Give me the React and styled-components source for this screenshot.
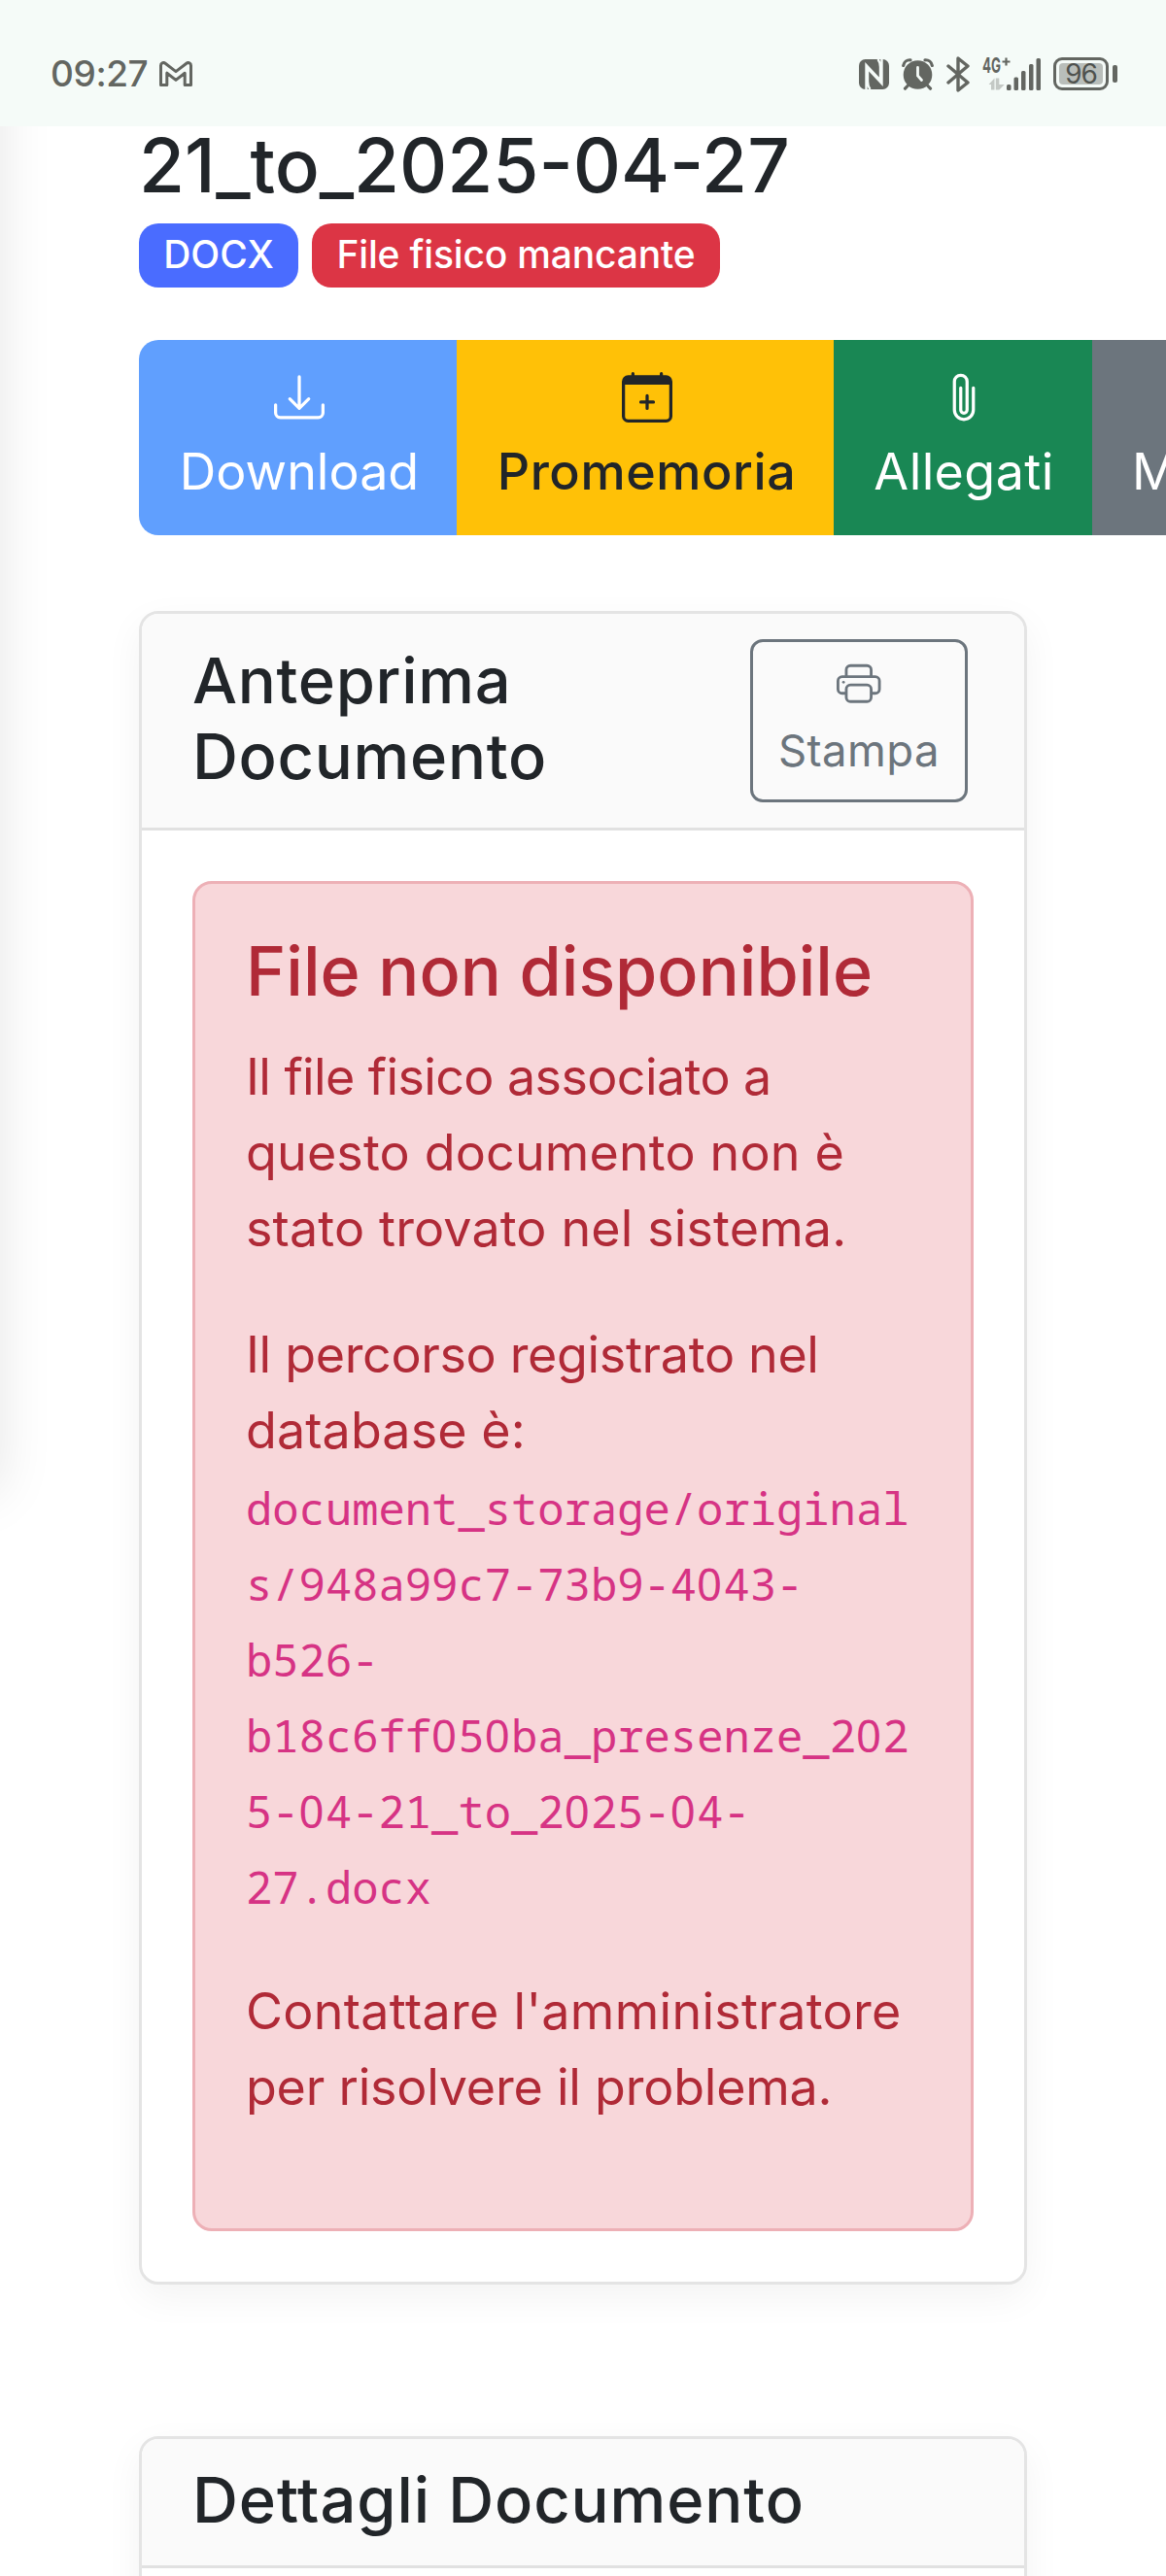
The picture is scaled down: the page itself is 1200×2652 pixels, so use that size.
import React from 'react';
import styled, { createGlobalStyle } from 'styled-components';
import { BsDownload, BsCalendarPlus, BsPaperclip, BsPrinter } from 'react-icons/bs';

const Global = createGlobalStyle`
  *, *::before, *::after { box-sizing: border-box; }
  body { margin: 0; background: #fff; }
`;

const Screen = styled.div`
  position: relative;
  width: 1200px;
  height: 2652px;
  overflow: hidden;
  background: #fff;
  color: #212529;
  font-family: Inter, 'Liberation Sans', sans-serif;
  font-size: 52px;
  line-height: 1.5;
`;

const SidebarEdge = styled.div`
  position: absolute;
  top: 0;
  left: -300px;
  width: 300px;
  height: 1536px;
  box-shadow: 0 0 52px rgba(0, 0, 0, 0.1);
`;

const StatusBar = styled.header`
  position: relative;
  display: flex;
  align-items: center;
  justify-content: space-between;
  height: 130px;
  padding: 22px 50px 0 52px;
  background: #f5fbf8;
  color: #636661;
`;

const StatusGroup = styled.div`
  display: flex;
  align-items: center;
  gap: ${(p) => p.$gap}px;
`;

const Clock = styled.span`
  font-size: 37px;
  line-height: 44px;
  font-weight: 500;
  letter-spacing: -0.4px;
`;

const Signal = styled.div`
  display: flex;
  align-items: flex-end;

  svg {
    overflow: visible;
  }
`;

const Battery = styled.div`
  display: flex;
  align-items: center;
  gap: 4px;

  &::after {
    content: '';
    width: 5px;
    height: 18px;
    border-radius: 2px;
    background: currentColor;
  }
`;

const BatteryShell = styled.div`
  width: 57px;
  height: 34px;
  padding: 3px;
  border: 3px solid currentColor;
  border-radius: 9px;
`;

const BatteryLevel = styled.div`
  height: 22px;
  border-radius: 4px;
  background: #b9beba;
  color: #4f524e;
  font-size: 28px;
  line-height: 22px;
  letter-spacing: -1px;
  text-align: center;
`;

const Content = styled.main`
  display: flex;
  flex-direction: column;
  padding-left: 143px;
`;

const PageTitle = styled.h1`
  margin: 0 0 19px;
  font-size: 76.3px;
  line-height: 81px;
  font-weight: 500;
`;

const BadgeRow = styled.div`
  display: flex;
  gap: 14px;
  margin-bottom: 54px;
`;

const Badge = styled.span`
  width: ${(p) => p.$width}px;
  height: 66px;
  border-radius: 20px;
  background: ${(p) => p.$bg};
  color: #fff;
  font-size: 39px;
  line-height: 64px;
  font-weight: 500;
  letter-spacing: ${(p) => p.$track || 0}px;
  text-align: center;
`;

const ButtonGroup = styled.div`
  display: flex;
  height: 201px;
  margin-bottom: 78px;
  border-radius: 20px 0 0 20px;
  overflow: hidden;
`;

const ActionButton = styled.button`
  display: flex;
  flex: none;
  flex-direction: column;
  align-items: ${(p) => p.$align || 'center'};
  gap: 12px;
  width: ${(p) => p.$width}px;
  padding: 33px 0 26px ${(p) => p.$pad || 0}px;
  border: 0;
  background: ${(p) => p.$bg};
  color: ${(p) => p.$color || '#fff'};
  font: inherit;
  font-weight: ${(p) => p.$weight || 400};
  letter-spacing: ${(p) => p.$track || 0}px;

  svg {
    flex: none;
    width: 52px;
    height: 52px;
  }
`;

const Card = styled.section`
  width: 914px;
  margin-bottom: 156px;
  border: 3px solid #e4e4e4;
  border-radius: 20px;
  background: #fff;
  box-shadow: 0 13px 39px rgba(0, 0, 0, 0.05);
`;

const CardHeader = styled.div`
  display: flex;
  align-items: center;
  justify-content: space-between;
  height: ${(p) => p.$height}px;
  padding: 0 58px 0 52px;
  border-bottom: 3px solid #e1e1e1;
  border-radius: 17px 17px 0 0;
  background: #fafafa;
`;

const CardTitle = styled.h2`
  margin: 0;
  padding-bottom: 5px;
  font-size: 65px;
  line-height: 78px;
  font-weight: 500;
  letter-spacing: ${(p) => p.$track}px;
`;

const CardBody = styled.div`
  padding: 52px;
`;

const OutlineButton = styled.button`
  display: flex;
  flex-direction: column;
  align-items: center;
  gap: 12px;
  width: 224px;
  height: 168px;
  padding: 20px 0 0;
  border: 3px solid #6c757d;
  border-radius: 13px;
  background: transparent;
  color: #6c757d;
  font: inherit;
  font-size: 45.5px;
  letter-spacing: 0.4px;

  svg {
    flex: none;
    width: 45.5px;
    height: 45.5px;
  }
`;

const Alert = styled.div`
  width: 804px;
  height: 1390px;
  padding: 48px 52px;
  border: 3px solid #edb0b6;
  border-radius: 20px;
  background: #f8d7da;
  color: #b02a37;
`;

const AlertTitle = styled.h3`
  margin: 0 0 28px;
  font-size: 70px;
  line-height: 84px;
  font-weight: 500;
`;

const Paragraph = styled.p`
  margin: 0 0 52px;
  white-space: nowrap;
`;

const Line = styled.span`
  display: block;
  height: 78px;
  letter-spacing: ${(p) => p.$track || 0}px;
`;

const Path = styled.code`
  display: block;
  height: 78px;
  color: #d63384;
  font-family: 'Noto Sans Mono', 'DejaVu Sans Mono', monospace;
  font-size: 45.5px;
  line-height: 80px;
`;

const Zero = styled.span`
  font-family: 'Noto Sans', sans-serif;
  letter-spacing: 0.028em;
`;

const pathLines = [
  'document_storage/original',
  's/948a99c7-73b9-4043-',
  'b526-',
  'b18c6ff050ba_presenze_202',
  '5-04-21_to_2025-04-',
  '27.docx',
];

const PathLine = ({ text }) => (
  <Path>{text.split(/(0)/).map((part, i) => (part === '0' ? <Zero key={i}>0</Zero> : part))}</Path>
);

const MailIcon = () => (
  <svg width="34" height="26" viewBox="0 0 34 26" fill="none" stroke="currentColor" strokeWidth="3" strokeLinejoin="round">
    <path d="M1.5 24.5V4.4c0-2.6 2.6-3.7 4.6-2.2L17 10.6 27.9 2.2c2-1.5 4.6-.4 4.6 2.2v20.100h-6.300V12.200L17 19.400l-9.200-7.200v12.300z" />
  </svg>
);

const NfcIcon = () => (
  <svg width="31" height="31" viewBox="0 0 31 31">
    <rect width="31" height="31" rx="6.5" fill="currentColor" />
    <path d="M7.5 31V6l14.500 15.500V8c0-3-.5-5.500-2.500-8M23.500 0v25L9 9.500V23c0 3 .5 5.500 2.500 8" fill="none" stroke="#f5fbf8" strokeWidth="2.4" />
  </svg>
);

const AlarmIcon = () => (
  <svg width="33" height="33" viewBox="0 0 33 33" fill="none" stroke="currentColor" strokeLinecap="round">
    <circle cx="16.5" cy="17" r="14.8" fill="currentColor" stroke="none" />
    <path d="M1.700 7.500c.6-3.600 3.500-6 7.300-5.700M31.300 7.500c-.6-3.600-3.500-6-7.300-5.700M6.500 28l-3 3.200M26.500 28l3 3.200" strokeWidth="3.2" />
    <path d="M16.5 9.500v8.500l4 4.500" stroke="#f5fbf8" strokeWidth="2.8" />
  </svg>
);

const BluetoothIcon = () => (
  <svg width="25" height="37" viewBox="0 0 25 37" fill="none" stroke="currentColor" strokeWidth="3.4" strokeLinejoin="round" strokeLinecap="round">
    <path d="M2 10l20 17-10 8V2l10 8L2 27" />
  </svg>
);

const SignalIcon = () => (
  <svg width="61" height="36" viewBox="0 0 61 36" fill="currentColor">
    <text x="0" y="17" fontSize="22" fontWeight="700" textLength="19" lengthAdjust="spacingAndGlyphs">4G</text>
    <path d="M20.500 5.500h8M24.500 1.500v8" stroke="currentColor" strokeWidth="2.2" />
    <path d="M6.500 29l6-6.500v12h-3.500v-5.500zM13.800 22.500h3.500v6.500h5.500l-5.500 5.500h-3.500z" fill="#c4c9c5" />
    <rect x="25" y="29" width="4.5" height="6" rx="1.5" />
    <rect x="32.5" y="21.5" width="4.5" height="13.5" rx="1.5" />
    <rect x="40" y="15" width="4.5" height="20" rx="1.5" />
    <rect x="48" y="8" width="4.5" height="27" rx="1.5" />
    <rect x="55.5" y="2" width="4.5" height="33" rx="1.5" />
  </svg>
);

export default function App() {
  return (
    <Screen>
      <Global />
      <SidebarEdge />
      <StatusBar>
        <StatusGroup $gap={12}>
          <Clock>09:27</Clock>
          <MailIcon />
        </StatusGroup>
        <StatusGroup $gap={12}>
          <StatusGroup $gap={13}>
            <NfcIcon />
            <AlarmIcon />
            <BluetoothIcon />
          </StatusGroup>
          <StatusGroup $gap={12}>
            <Signal><SignalIcon /></Signal>
            <Battery>
              <BatteryShell>
                <BatteryLevel>96</BatteryLevel>
              </BatteryShell>
            </Battery>
          </StatusGroup>
        </StatusGroup>
      </StatusBar>

      <Content>
        <PageTitle>21_to_2025-04-27</PageTitle>
        <BadgeRow>
          <Badge $bg="#4a6cff" $width={164}>DOCX</Badge>
          <Badge $bg="#dc3545" $width={420} $track={-0.17}>File fisico mancante</Badge>
        </BadgeRow>

        <ButtonGroup>
          <ActionButton $bg="#609ffe" $width={327} $pad={3}>
            <BsDownload />
            Download
          </ActionButton>
          <ActionButton $bg="#ffc107" $color="#212529" $width={388} $pad={3} $weight={500} $track={0.6}>
            <BsCalendarPlus />
            Promemoria
          </ActionButton>
          <ActionButton $bg="#198754" $width={266} $pad={2} $track={0.4}>
            <BsPaperclip />
            Allegati
          </ActionButton>
          <ActionButton $bg="#6c757d" $width={240} $align="flex-start" $pad={41}>
            <svg />
            M
          </ActionButton>
        </ButtonGroup>

        <Card>
          <CardHeader $height={223}>
            <CardTitle $track={0.7}>
              Anteprima
              <br />
              Documento
            </CardTitle>
            <OutlineButton>
              <BsPrinter />
              Stampa
            </OutlineButton>
          </CardHeader>
          <CardBody>
            <Alert>
              <AlertTitle>File non disponibile</AlertTitle>
              <Paragraph>
                <Line $track={-0.6}>Il file fisico associato a</Line>
                <Line $track={0.15}>questo documento non è</Line>
                <Line $track={0.13}>stato trovato nel sistema.</Line>
              </Paragraph>
              <Paragraph>
                <Line $track={-0.34}>Il percorso registrato nel</Line>
                <Line $track={0.1}>database è:</Line>
                {pathLines.map((text) => (
                  <PathLine key={text} text={text} />
                ))}
              </Paragraph>
              <Paragraph>
                <Line $track={0.3}>Contattare l'amministratore</Line>
                <Line $track={-0.22}>per risolvere il problema.</Line>
              </Paragraph>
            </Alert>
          </CardBody>
        </Card>

        <Card>
          <CardHeader $height={133}>
            <CardTitle $track={0.9}>Dettagli Documento</CardTitle>
          </CardHeader>
          <CardBody />
        </Card>
      </Content>
    </Screen>
  );
}
